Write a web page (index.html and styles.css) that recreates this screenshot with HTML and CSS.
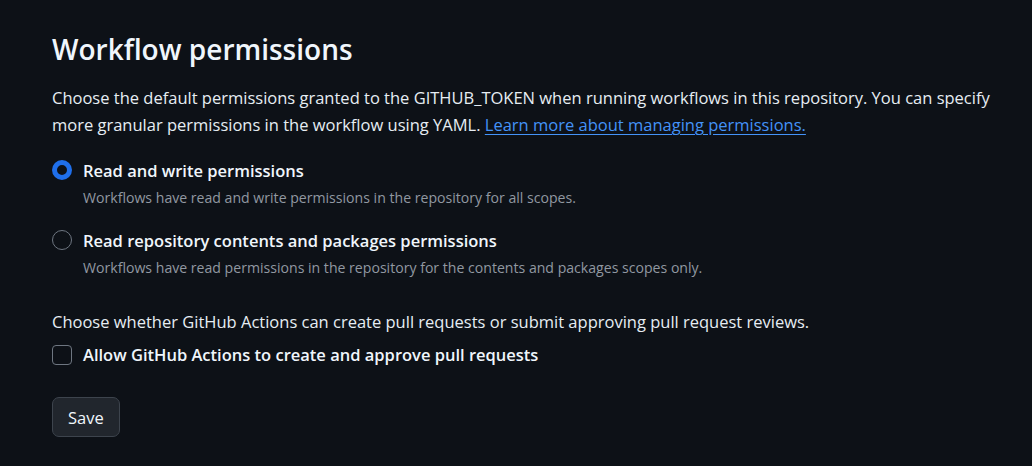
FILE: index.html
```html
<!DOCTYPE html>
<html lang="en">
<head>
<meta charset="utf-8">
<title>Workflow permissions</title>
<link rel="stylesheet" href="styles.css">
</head>
<body>
<main class="page">
  <h2 class="heading">Workflow permissions</h2>
  <p class="intro">Choose the default permissions granted to the GITHUB_TOKEN when running workflows in this repository. You can specify more granular permissions in the workflow using YAML. <a class="link" href="#">Learn more about managing permissions.</a></p>

  <div class="options">
    <label class="option">
      <span class="radio radio-checked"></span>
      <span class="option-text">
        <span class="option-title">Read and write permissions</span>
        <span class="option-desc">Workflows have read and write permissions in the repository for all scopes.</span>
      </span>
    </label>
    <label class="option">
      <span class="radio"></span>
      <span class="option-text">
        <span class="option-title">Read repository contents and packages permissions</span>
        <span class="option-desc">Workflows have read permissions in the repository for the contents and packages scopes only.</span>
      </span>
    </label>
  </div>

  <p class="pr-note">Choose whether GitHub Actions can create pull requests or submit approving pull request reviews.</p>
  <label class="check-row">
    <span class="checkbox"></span>
    <span class="option-title">Allow GitHub Actions to create and approve pull requests</span>
  </label>

  <button class="btn" type="button">Save</button>
</main>
</body>
</html>
```

FILE: styles.css
```css
html, body {
  margin: 0;
  padding: 0;
  background: #0d1117;
}
body {
  font-family: "Open Sans", "Noto Sans", sans-serif;
  color: #e6edf3;
  font-size: 16.5px;
  line-height: 27px;
}
.page {
  padding: 30px 8px 0 52px;
  display: flex;
  flex-direction: column;
  align-items: flex-start;
}
.heading {
  margin: 0;
  font-size: 28px;
  font-weight: 600;
  line-height: 38px;
  color: #f0f6fc;
}
.intro {
  margin: 16px 0 0 0;
}
.link {
  color: #4493f8;
  text-decoration: underline;
  text-underline-offset: 3px;
}
.options {
  margin-top: 19px;
  display: flex;
  flex-direction: column;
  gap: 16px;
}
.option {
  display: flex;
  gap: 11px;
  align-items: flex-start;
}
.radio {
  flex: none;
  width: 20px;
  height: 20px;
  margin-top: 3px;
  box-sizing: border-box;
  border-radius: 50%;
  border: 1px solid #6e7681;
}
.radio-checked {
  border: 5px solid #1f6feb;
  background: #0d1117;
}
.option-text {
  display: flex;
  flex-direction: column;
}
.option-title {
  font-weight: 600;
  color: #f0f6fc;
}
.option-desc {
  font-size: 14.1px;
  line-height: 27px;
  color: #9198a1;
}
.pr-note {
  margin: 27px 0 0 0;
}
.check-row {
  margin-top: 6px;
  display: flex;
  gap: 11px;
  align-items: center;
}
.checkbox {
  flex: none;
  width: 20px;
  height: 20px;
  box-sizing: border-box;
  border-radius: 4px;
  border: 1px solid #6e7681;
}
.btn {
  margin-top: 29px;
  height: 40px;
  padding: 0 15px;
  font-family: inherit;
  font-size: 16.5px;
  color: #f0f6fc;
  background: #21262d;
  border: 1px solid #3d444d;
  border-radius: 7px;
}
```
